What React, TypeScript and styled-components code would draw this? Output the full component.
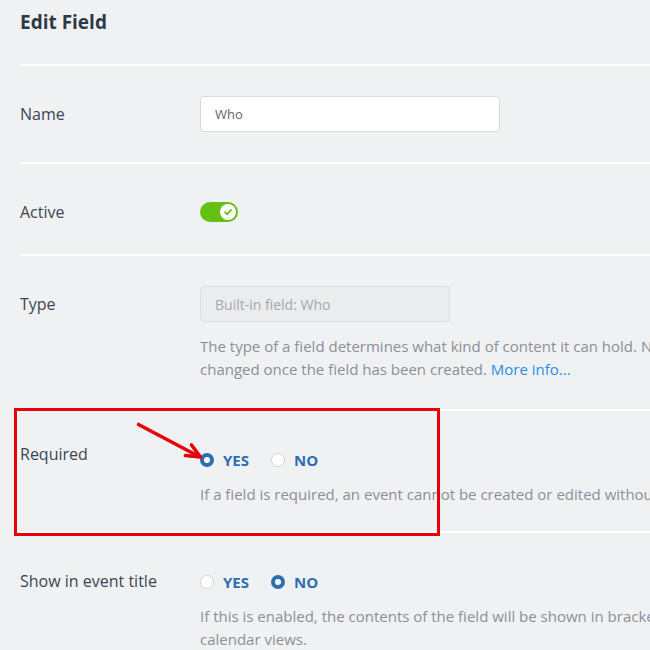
import React from "react";
import styled, { createGlobalStyle } from "styled-components";

const GlobalStyle = createGlobalStyle`
  html, body {
    margin: 0;
    padding: 0;
    background: #f0f1f3;
    overflow: hidden;
  }
  body {
    font-family: "Open Sans", "Noto Sans", sans-serif;
  }
`;

const Page = styled.div`
  position: relative;
  width: 1000px;
  padding-left: 20px;
  box-sizing: border-box;
`;

const Title = styled.h1`
  margin: 0 0 28px;
  padding-top: 8px;
  font-size: 19px;
  line-height: 28px;
  font-weight: 700;
  color: #2c3a47;
`;

const Row = styled.div<{ $pb?: number }>`
  display: grid;
  grid-template-columns: 180px 1fr;
  border-top: 2px solid #ffffff;
  padding: 30px 0 ${({ $pb }) => $pb ?? 28}px;
`;

const Label = styled.div<{ $shift?: number }>`
  font-size: 16px;
  line-height: 36px;
  color: #3a4651;
  margin-top: ${({ $shift }) => $shift ?? 0}px;
`;

const Field = styled.div`
  display: flex;
  flex-direction: column;
  align-items: flex-start;
`;

const TextInput = styled.input<{ $width: number }>`
  box-sizing: border-box;
  width: ${({ $width }) => $width}px;
  height: 36px;
  padding: 0 14px;
  border: 1px solid #d6d9dd;
  border-radius: 4px;
  background: #ffffff;
  font-family: inherit;
  font-size: 13px;
  color: #62676c;
  outline: none;

  &:disabled {
    background: #ebecee;
    border-color: #dcdfe2;
    color: #a3a8ae;
    font-size: 14px;
  }
`;

const Help = styled.div`
  margin-top: 13px;
  font-size: 15px;
  line-height: 23px;
  color: #8a9097;
  white-space: nowrap;
`;

const Link = styled.a`
  color: #2a8ce2;
  text-decoration: none;
`;

const ToggleLine = styled.div`
  height: 36px;
  display: flex;
  align-items: center;
`;

const Track = styled.div`
  width: 38px;
  height: 20px;
  border-radius: 10px;
  background: #66bf13;
  display: flex;
  align-items: center;
  justify-content: flex-end;
  padding: 0 2px;
  box-sizing: border-box;
`;

const Knob = styled.div`
  width: 16px;
  height: 16px;
  border-radius: 50%;
  background: #ffffff;
  display: flex;
  align-items: center;
  justify-content: center;
`;

const RadioGroup = styled.div`
  margin-top: 9px;
  height: 20px;
  display: flex;
  align-items: center;
  gap: 22px;
`;

const Option = styled.label`
  display: flex;
  align-items: center;
  gap: 9px;
  font-size: 15px;
  font-weight: 700;
  color: #2d6db1;
`;

const Dot = styled.span<{ $checked?: boolean }>`
  box-sizing: border-box;
  width: 14px;
  height: 14px;
  border-radius: 50%;
  background: #ffffff;
  border: ${({ $checked }) => ($checked ? "4px solid #2d6db1" : "1px solid #d0d3d7")};
`;

const Highlight = styled.div`
  position: absolute;
  left: 14px;
  top: 408px;
  width: 426px;
  height: 128px;
  box-sizing: border-box;
  border: 3px solid #e6000a;
  pointer-events: none;
`;

const Arrow = styled.svg`
  position: absolute;
  left: 135px;
  top: 418px;
`;

const Toggle = () => (
  <ToggleLine>
    <Track>
      <Knob>
        <svg width="10" height="10" viewBox="0 0 10 10">
          <path d="M2 5.2 L4.2 7.3 L8 2.9" fill="none" stroke="#66bf13" strokeWidth="1.8" strokeLinecap="round" strokeLinejoin="round" />
        </svg>
      </Knob>
    </Track>
  </ToggleLine>
);

const YesNo = ({ yes }: { yes: boolean }) => (
  <RadioGroup>
    <Option>
      <Dot $checked={yes} />
      YES
    </Option>
    <Option>
      <Dot $checked={!yes} />
      NO
    </Option>
  </RadioGroup>
);

export default function App() {
  return (
    <>
      <GlobalStyle />
      <Page>
        <Title>Edit Field</Title>

        <Row $pb={30}>
          <Label>Name</Label>
          <Field>
            <TextInput $width={300} defaultValue="Who" />
          </Field>
        </Row>

        <Row $pb={24}>
          <Label>Active</Label>
          <Field>
            <Toggle />
          </Field>
        </Row>

        <Row $pb={28}>
          <Label>Type</Label>
          <Field>
            <TextInput $width={250} value="Built-in field: Who" disabled readOnly />
            <Help>
              The type of a field determines what kind of content it can hold. Note that the type cannot be
              <br />
              changed once the field has been created. <Link href="#">More info...</Link>
            </Help>
          </Field>
        </Row>

        <Row $pb={25}>
          <Label $shift={-5}>Required</Label>
          <Field>
            <YesNo yes />
            <Help>If a field is required, an event cannot be created or edited without a value for this field.</Help>
          </Field>
        </Row>

        <Row>
          <Label>Show in event title</Label>
          <Field>
            <YesNo yes={false} />
            <Help>
              If this is enabled, the contents of the field will be shown in brackets after the event title in
              <br />
              calendar views.
            </Help>
          </Field>
        </Row>

        <Highlight />
        <Arrow width="70" height="45" viewBox="0 0 70 45">
          <path d="M3.5 6.5 L64 38.5" stroke="#e6000a" strokeWidth="3.6" strokeLinecap="round" fill="none" />
          <path d="M56.5 27 L65.5 39 L50.5 37.5" stroke="#e6000a" strokeWidth="3.6" strokeLinecap="round" strokeLinejoin="round" fill="none" />
        </Arrow>
      </Page>
    </>
  );
}
